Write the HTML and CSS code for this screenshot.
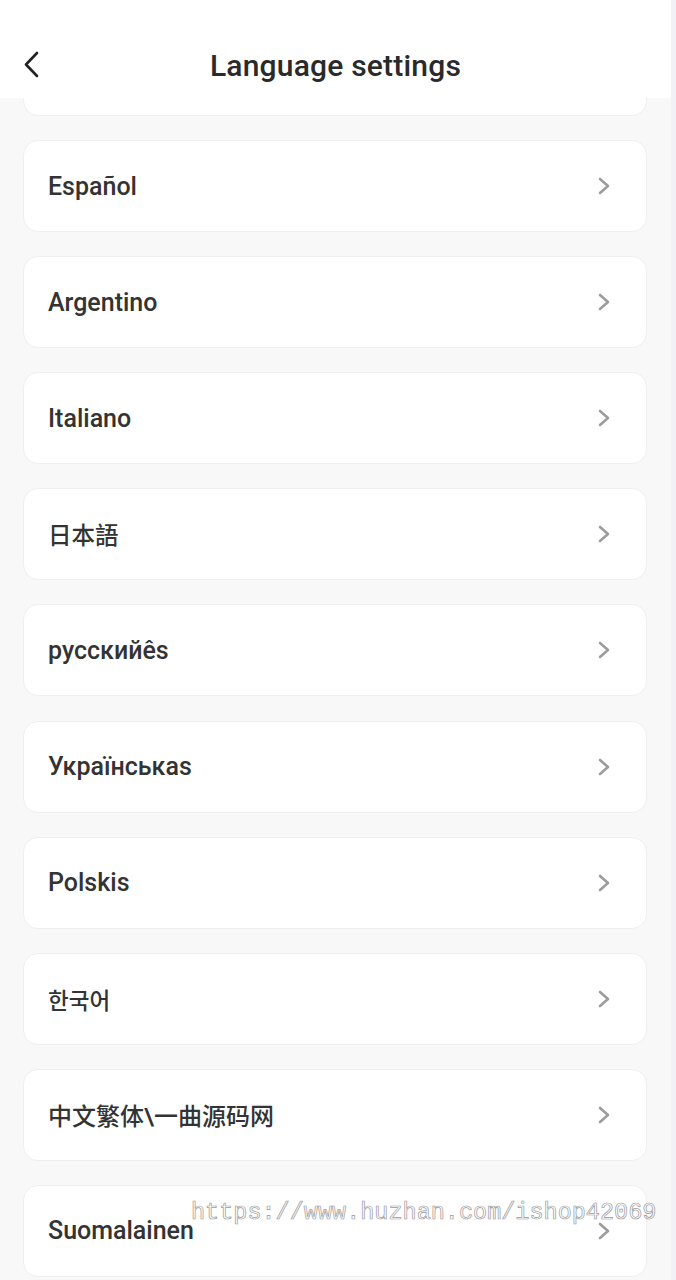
FILE: index.html
```html
<!DOCTYPE html>
<html lang="en">
<head>
    <meta charset="UTF-8">
    <meta name="viewport" content="width=device-width, initial-scale=1.0">
    <title>Language settings</title>
    <link rel="stylesheet" href="styles.css">
</head>
<body>
<div class="screen">
    <div class="page">
        <header class="top-bar">
            <a class="back" href="#">
                <svg width="16" height="27" viewBox="0 0 16 27"><path d="M14 2 L3 13.5 L14 25" fill="none" stroke="#222" stroke-width="2.6" stroke-linecap="round" stroke-linejoin="round"/></svg>
            </a>
            <h1>Language settings</h1>
        </header>

        <div class="list">
            <div class="item item-hidden"><span>English</span></div>
            <div class="item"><span>Español</span><svg class="arrow" viewBox="0 0 14 18"><path d="M3 2 L11 9 L3 16"/></svg></div>
            <div class="item"><span>Argentino</span><svg class="arrow" viewBox="0 0 14 18"><path d="M3 2 L11 9 L3 16"/></svg></div>
            <div class="item"><span>Italiano</span><svg class="arrow" viewBox="0 0 14 18"><path d="M3 2 L11 9 L3 16"/></svg></div>
            <div class="item"><span class="cjk">日本語</span><svg class="arrow" viewBox="0 0 14 18"><path d="M3 2 L11 9 L3 16"/></svg></div>
            <div class="item"><span>русскийês</span><svg class="arrow" viewBox="0 0 14 18"><path d="M3 2 L11 9 L3 16"/></svg></div>
            <div class="item"><span>Українськаs</span><svg class="arrow" viewBox="0 0 14 18"><path d="M3 2 L11 9 L3 16"/></svg></div>
            <div class="item"><span>Polskis</span><svg class="arrow" viewBox="0 0 14 18"><path d="M3 2 L11 9 L3 16"/></svg></div>
            <div class="item"><span class="korean">한국어</span><svg class="arrow" viewBox="0 0 14 18"><path d="M3 2 L11 9 L3 16"/></svg></div>
            <div class="item"><span class="cjk zh">中文繁体\一曲源码网</span><svg class="arrow" viewBox="0 0 14 18"><path d="M3 2 L11 9 L3 16"/></svg></div>
            <div class="item"><span>Suomalainen</span><svg class="arrow" viewBox="0 0 14 18"><path d="M3 2 L11 9 L3 16"/></svg></div>
        </div>
    </div>
    <div class="scroll-strip"></div>
    <div class="watermark">https://www.huzhan.com/ishop42069</div>
</div>
</body>
</html>
```

FILE: styles.css
```css
/* General Reset */
body {
    margin: 0;
    padding: 0;
    background: #f8f8f9;
    font-family: Roboto, "Noto Sans CJK SC", sans-serif;
    color: #333;
}

.screen {
    position: relative;
    display: flex;
    height: 1280px;
    overflow: hidden;
}

.page {
    flex: 1;
    display: flex;
    flex-direction: column;
}

/* Top bar */
.top-bar {
    position: relative;
    z-index: 2;
    height: 98px;
    background: #fff;
    display: flex;
    align-items: center;
    justify-content: center;
    flex-shrink: 0;
    padding-top: 32px;
    box-sizing: border-box;
}

.top-bar h1 {
    margin: 0;
    font-size: 30px;
    font-weight: 500;
    color: #2a2a2a;
    letter-spacing: 0.2px;
}

.back {
    position: absolute;
    left: 23px;
    top: 51px;
    display: block;
    line-height: 0;
}

/* List of languages */
.list {
    display: flex;
    flex-direction: column;
    gap: 24.1px;
    padding: 0 24px 0 23px;
    margin-top: -74px;
}

.item {
    height: 92px;
    box-sizing: border-box;
    background: #fff;
    border: 1px solid #efeff0;
    border-radius: 15px;
    display: flex;
    align-items: center;
    justify-content: space-between;
    padding: 0 35px 0 24px;
    font-size: 25px;
    font-weight: 500;
    color: #333;
    flex-shrink: 0;
}

.item .cjk {
    font-size: 23.5px;
}

.item .zh {
    font-size: 24px;
}

.item .korean {
    font-family: "Noto Sans CJK KR", sans-serif;
    font-size: 22.5px;
}

.item-hidden span {
    visibility: hidden;
}

.arrow {
    width: 14px;
    height: 18px;
    fill: none;
    stroke: #9c9c9c;
    stroke-width: 2.6;
    stroke-linecap: round;
    stroke-linejoin: round;
}

.scroll-strip {
    width: 5px;
    background: #f1f1f6;
}

/* Watermark overlay */
.watermark {
    position: absolute;
    left: 191px;
    top: 1199px;
    font-family: "Liberation Mono", monospace;
    font-size: 23.5px;
    color: transparent;
    -webkit-text-stroke: 0.7px #9a9a9a;
    white-space: nowrap;
}
```
